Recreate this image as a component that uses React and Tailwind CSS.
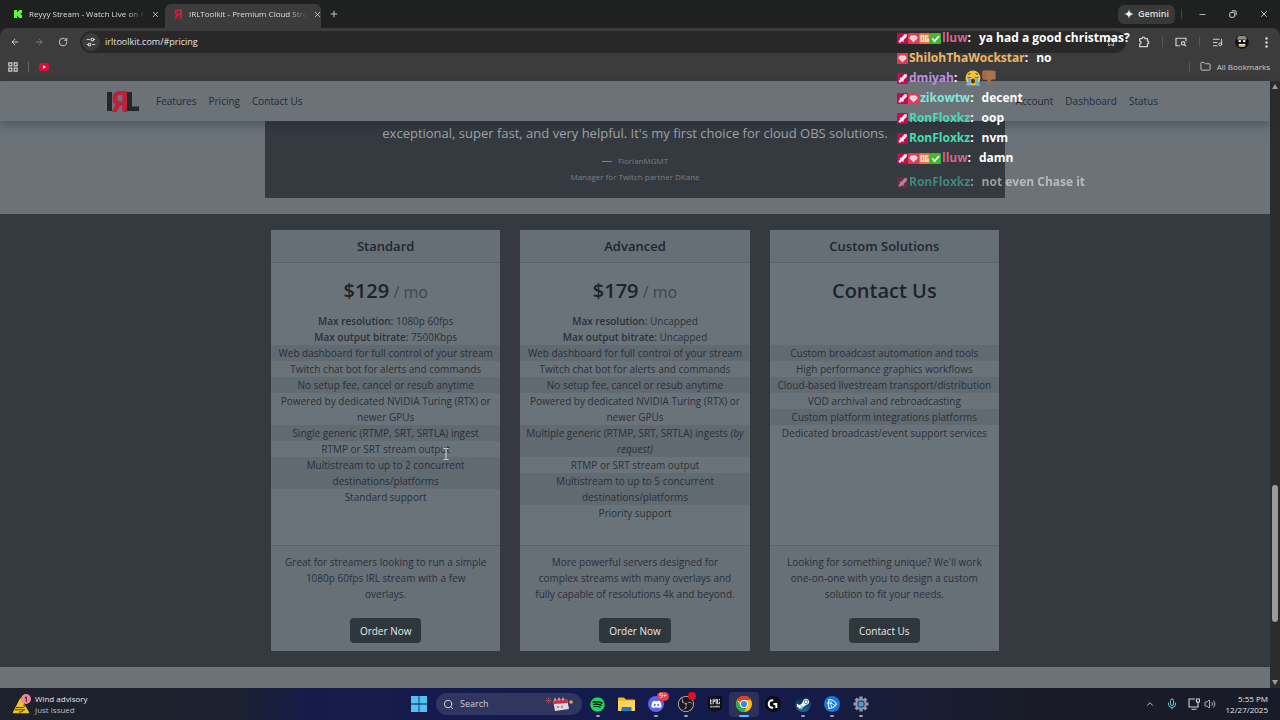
import React from "react";
import { ArrowLeft, ArrowRight, RotateCw, Star, Search, ChevronUp, Mic, X, Plus, Minus, Folder, ListMusic, Volume2 } from "lucide-react";
import { FaSpotify, FaDiscord, FaSteamSymbol } from "react-icons/fa";
import { SiObsstudio, SiEpicgames } from "react-icons/si";

function TunerIcon() {
  return (
    <svg viewBox="0 0 12 12" className="size-2.5" fill="none" stroke="#d5d5d5" strokeWidth="1.3">
      <path d="M1 3h3.5M7.5 9H11" />
      <circle cx="7.6" cy="3" r="1.6" />
      <circle cx="4.2" cy="9" r="1.6" />
      <path d="M9.4 3H11M1 9h1.4" />
    </svg>
  );
}

function AppsIcon() {
  return (
    <svg viewBox="0 0 12 12" className="size-2.5" fill="none" stroke="#d0d0d0" strokeWidth="1.4">
      <path d="M1 1h3.6v3.6H1zM7.4 1H11v3.6H7.4zM1 7.4h3.6V11H1zM7.4 7.4H11V11H7.4z" />
    </svg>
  );
}

function KickIcon() {
  return (
    <svg viewBox="0 0 10 10" className="size-2.5 shrink-0">
      <rect width="10" height="10" rx="1" fill="#102a0c" />
      <path d="M1 1h3v2h1V2h1V1h3v3H8v2h1v3H6V8H5V7H4v2H1z" fill="#5cf83a" />
    </svg>
  );
}

function IrlFavicon() {
  return (
    <svg viewBox="0 0 10 10" className="size-2.5 shrink-0" fill="none" stroke="#c8203c" strokeWidth="2">
      <path d="M8 0v10M8 1.4H4.4a1.8 1.8 0 0 0 0 3.9H8M4.6 5.3 2.3 9.8" />
    </svg>
  );
}

function IrlLogo() {
  return (
    <svg viewBox="0 0 32 21" className="h-[21px] w-8">
      <path d="M0 1h5v19H0z" fill="#23262c" />
      <path d="M20 1h5v14.5h7V20H20z" fill="#23262c" />
      <path d="M20 0v21h-4.6v-6.5h-2.1L9.6 21H4.6l4.3-7.3C6.700 12.700 5.500 10.800 5.500 7.600 5.500 2.600 8.300 0 13 0zM15.400 4h-2c-2.100 0-3.100 1.100-3.100 3.300s1 3.200 3.100 3.200h2z" fill="#c01f38" />
    </svg>
  );
}

function Gemini() {
  return (
    <svg viewBox="0 0 10 10" className="size-2.5" fill="#f2f2f2">
      <path d="M5 0C5.500 3.400 6.600 4.500 10 5 6.600 5.500 5.500 6.600 5 10 4.500 6.600 3.400 5.500 0 5 3.400 4.500 4.500 3.400 5 0z" />
    </svg>
  );
}

function RestoreIcon() {
  return (
    <svg viewBox="0 0 10 10" className="size-2" fill="none" stroke="#dadada" strokeWidth="1.200">
      <rect x="1" y="3" width="6" height="6" rx="1" />
      <path d="M3.500 1h4A1.500 1.500 0 0 1 9 2.500v4" />
    </svg>
  );
}

function ExtensionIcon() {
  return (
    <svg viewBox="0 0 14 14" className="size-3" fill="none" stroke="#cfcfcf" strokeWidth="1.500" strokeLinejoin="round">
      <path d="M2 3h2.800a1.600 1.600 0 0 1 3.200 0h3v3a1.600 1.600 0 0 1 0 3.200V12.500H2V9.300a1.600 1.600 0 0 0 0-3.200z" />
    </svg>
  );
}

function LensIcon() {
  return (
    <svg viewBox="0 0 14 12" className="h-2.5 w-3" fill="none" stroke="#cfcfcf" strokeWidth="1.400">
      <path d="M6 10.500H1v-9h12V5" />
      <circle cx="9.500" cy="7.500" r="2" />
      <path d="m11 9 2.300 2.300" />
    </svg>
  );
}

function Avatar() {
  return (
    <svg viewBox="0 0 14 14" className="size-3.5">
      <circle cx="7" cy="7" r="6.800" fill="#121212" />
      <path d="M2 3.500 4 1h6l2 2.500v1H2z" fill="#8d8d86" />
      <circle cx="4.800" cy="6" r="1.300" fill="#eee" />
      <circle cx="9.200" cy="6" r="1.300" fill="#eee" />
      <path d="M3 9.500h8L9.500 12h-5z" fill="#c4b06a" />
      <path d="M4 9h6v1H4z" fill="#eee" />
    </svg>
  );
}

/* chat badges */
function Sword() {
  return (
    <svg viewBox="0 0 11 11" className="size-[11px] shrink-0">
      <rect width="11" height="11" rx="1" fill="#c30b4b" />
      <path d="M9.800 1.200v2.500L6.300 7.200l.7.800-1 1-1-1-2 2-1.700-1.700 2-2-.8-.8.900-.9.800.5 3.300-3.900z" fill="#ffe9f0" />
    </svg>
  );
}
function Gem() {
  return (
    <svg viewBox="0 0 11 11" className="size-[11px] shrink-0">
      <rect width="11" height="11" rx="1" fill="#df3a58" />
      <path d="M3 2.500h5L9.800 5 5.500 9.300 1.200 5z" fill="#ffe5ea" />
      <path d="M2.500 4.800h6M4.300 4.800 5.500 8l1.200-3.200" stroke="#f09aaa" strokeWidth=".6" fill="none" />
    </svg>
  );
}
function Og() {
  return (
    <svg viewBox="0 0 11 11" className="size-[11px] shrink-0">
      <rect width="11" height="11" rx="1" fill="#e8703a" />
      <path d="M4.600 2.700H2.200v5.600h2.400zM9.400 3H6.700v5.200h2.400V6H8" stroke="#fff1e6" strokeWidth="1.500" fill="none" />
    </svg>
  );
}
function Check() {
  return (
    <svg viewBox="0 0 11 11" className="size-[11px] shrink-0">
      <rect width="11" height="11" rx="1" fill="#41b92c" />
      <path d="m2.300 5.500 2.300 2.600L9 3" stroke="#fff" strokeWidth="1.700" fill="none" />
    </svg>
  );
}
function Sob() {
  return (
    <svg viewBox="0 0 16 16" className="size-4">
      <circle cx="8" cy="8" r="7.500" fill="#f3c33c" />
      <path d="M2.500 7.200c1.200.8 2.500.8 3.700 0M9.800 7.200c1.200.8 2.500.8 3.700 0M3 4.500l2.500-1M13 4.500l-2.500-1" stroke="#5b3d13" strokeWidth="1" fill="none" />
      <path d="M3 8h2.600v7H2.500C1.500 15 1.500 13.500 3 12zM10.400 8H13v4c1.500 1.500 1.500 3 .5 3h-3.100z" fill="#5fb4ec" />
      <ellipse cx="8" cy="11" rx="2" ry="2.600" fill="#5b2b12" />
      <path d="M.5 15.500c1-2 4-2 5 0zM10.500 15.500c1-2 4-2 5 0z" fill="#74c0f0" />
    </svg>
  );
}
function ThumbDown() {
  return (
    <svg viewBox="0 0 16 16" className="size-4">
      <path d="M1.500 2C1.500.8 3 .4 4.500.6h6.300L14.500 1v8.500h-3.800c-1 1-1.500 2-1.300 3.800.1 1.600-2.300 2-2.700.2L6.200 9.800H3C1.500 9.800 1 8.400 1.900 7.700.8 7.300.8 5.800 1.600 5.300.9 4.800.7 3.500 1.500 2z" fill="#a97350" />
      <path d="M2 5.400h3.500M2.200 7.800h3.300M1.900 3h3.500" stroke="#7d4d2c" strokeWidth=".6" />
    </svg>
  );
}

const BADGES = { sword: Sword, gem: Gem, og: Og, check: Check };
const MESSAGES = [
  { badges: ["sword", "gem", "og", "check"], name: "lluw", color: "text-[#d9628e]", text: "ya had a good christmas?" },
  { badges: ["gem"], name: "ShilohThaWockstar", color: "text-[#eeb765]", text: "no" },
  { badges: ["sword"], name: "dmiyah", color: "text-[#bf8fe6]", emoji: true },
  { badges: ["sword", "gem"], name: "zikowtw", color: "text-[#86e6d8]", text: "decent" },
  { badges: ["sword"], name: "RonFloxkz", color: "text-[#45dcb4]", text: "oop" },
  { badges: ["sword"], name: "RonFloxkz", color: "text-[#45dcb4]", text: "nvm" },
  { badges: ["sword", "gem", "og", "check"], name: "lluw", color: "text-[#d9628e]", text: "damn" },
  { badges: ["sword"], name: "RonFloxkz", color: "text-[#45dcb4]", text: "not even Chase it", faded: true },
];

function ChatOverlay() {
  return (
    <ul className="pointer-events-none absolute left-[897px] top-7 z-30 text-[12px] font-bold leading-5 text-white">
      {MESSAGES.map((m, i) => (
        <li key={i} className={m.faded ? "mt-1 flex h-5 items-center opacity-50" : "flex h-5 items-center"}>
          {m.badges.map((b) => {
            const B = BADGES[b];
            return <B key={b} />;
          })}
          <span className={`ml-px ${m.color}`}>{m.name}</span>
          <span className="mr-2">:</span>
          {m.emoji ? (
            <span className="flex">
              <Sob />
              <ThumbDown />
            </span>
          ) : (
            <span className="whitespace-nowrap">{m.text}</span>
          )}
        </li>
      ))}
    </ul>
  );
}

function Browser() {
  return (
    <header className="bg-[#1f2020] text-[#dedede]">
      <div className="flex h-7 items-center text-[8px]">
        <div className="flex w-[165px] items-center gap-1.5 pl-[13px] pr-2">
          <KickIcon />
          <span className="whitespace-nowrap mask-r-from-85%">Reyyy Stream - Watch Live on K</span>
          <button aria-label="Close tab" className="ml-auto"><X size={9} /></button>
        </div>
        <div className="mt-1 flex h-6 w-[156px] items-center gap-1.5 rounded-t-md bg-[#3c3c3c] pb-1 pl-2 pr-1.5">
          <IrlFavicon />
          <span className="whitespace-nowrap mask-r-from-85%">IRLToolkit - Premium Cloud Stre</span>
          <button aria-label="Close tab" className="ml-auto"><X size={9} /></button>
        </div>
        <button aria-label="New tab" className="ml-2"><Plus size={10} /></button>
        <div className="ml-auto flex items-center">
          <button className="flex h-[19px] items-center gap-1 rounded-md bg-[#383939] px-1.5 text-[9px] font-semibold"><Gemini />Gemini</button>
          <span className="ml-1.5 h-2.5 w-px bg-[#444]" />
          <button aria-label="Minimize" className="ml-4"><Minus size={9} /></button>
          <button aria-label="Restore" className="ml-[22px]"><RestoreIcon /></button>
          <button aria-label="Close" className="ml-[22px] mr-[11px]"><X size={10} /></button>
        </div>
      </div>
      <div className="rounded-t-lg bg-[#3c3c3c]">
        <div className="flex h-7 items-center pl-2.5 pr-2.5 text-[9px]">
          <button aria-label="Back"><ArrowLeft size={10} /></button>
          <button aria-label="Forward" className="ml-3.5 text-[#808080]"><ArrowRight size={10} /></button>
          <button aria-label="Reload" className="ml-3.5"><RotateCw size={10} /></button>
          <form className="ml-3 flex h-[22px] flex-1 items-center gap-[5px] rounded-full bg-[#282828] pl-0.5 pr-2.5">
            <button type="button" aria-label="Site information" className="flex size-[18px] items-center justify-center rounded-full bg-[#3c3c3c]"><TunerIcon /></button>
            <input aria-label="Address" defaultValue="irltoolkit.com/#pricing" className="min-w-0 flex-1 bg-transparent text-[#e3e3e3] outline-none" />
            <button type="button" aria-label="Bookmark"><Star size={10} /></button>
          </form>
          <button aria-label="Extensions" className="ml-3"><ExtensionIcon /></button>
          <span className="ml-3 h-2.5 w-px bg-[#565656]" />
          <button aria-label="Lens" className="ml-3"><LensIcon /></button>
          <span className="ml-3 h-2.5 w-px bg-[#565656]" />
          <button aria-label="Media" className="ml-3"><ListMusic size={11} /></button>
          <button aria-label="Profile" className="ml-3"><Avatar /></button>
          <button aria-label="Menu" className="ml-4 mr-0.5">
            <svg viewBox="0 0 3 11" className="h-[11px] w-[3px]" fill="#dcdcdc">
              <circle cx="1.500" cy="1.500" r="1.200" /><circle cx="1.500" cy="5.500" r="1.200" /><circle cx="1.500" cy="9.500" r="1.200" />
            </svg>
          </button>
        </div>
        <div className="flex h-[25px] items-center pb-1 pl-2 pr-2.5 text-[8px]">
          <button aria-label="Apps"><AppsIcon /></button>
          <span className="ml-2.5 h-2.5 w-px bg-[#666]" />
          <a href="#youtube" aria-label="YouTube" className="ml-2.5">
            <svg viewBox="0 0 10 8" className="h-2 w-2.5"><rect width="10" height="8" rx="2" fill="#d90f38" /><path d="M4 2.300 7 4 4 5.700z" fill="#fff" /></svg>
          </a>
          <span className="ml-auto h-2.5 w-px bg-[#565656]" />
          <button className="ml-2.5 flex items-center gap-1.5 text-[#cccccc]"><Folder size={11} />All Bookmarks</button>
        </div>
      </div>
    </header>
  );
}

function Nav() {
  return (
    <nav className="relative z-10 flex h-10 items-center justify-between bg-[#6b7379] pl-[107px] pr-28 text-[10px] font-medium text-[#242b35] shadow-[0_4px_10px_rgba(30,35,42,0.35)]">
      <div className="flex items-center gap-3">
        <a href="#home" aria-label="IRLToolkit" className="mr-[5px]"><IrlLogo /></a>
        <a href="#features">Features</a>
        <a href="#pricing">Pricing</a>
        <a href="#contact">Contact Us</a>
      </div>
      <div className="flex gap-3">
        <a href="#account">Account</a>
        <a href="#dashboard">Dashboard</a>
        <a href="#status">Status</a>
      </div>
    </nav>
  );
}

const COMMON = [
  "Web dashboard for full control of your stream",
  "Twitch chat bot for alerts and commands",
  "No setup fee, cancel or resub anytime",
  "Powered by dedicated NVIDIA Turing (RTX) or newer GPUs",
];
const PLANS = [
  {
    title: "Standard", price: "$129", per: "/ mo", res: "1080p 60fps", rate: "7500Kbps",
    rows: [...COMMON, "Single generic (RTMP, SRT, SRTLA) ingest", "RTMP or SRT stream output", "Multistream to up to 2 concurrent destinations/platforms", "Standard support"],
    blurb: <>Great for streamers looking to run a simple 1080p 60fps IRL stream with a few<br />overlays.</>, cta: "Order Now",
  },
  {
    title: "Advanced", price: "$179", per: "/ mo", res: "Uncapped", rate: "Uncapped",
    rows: [...COMMON, <>Multiple generic (RTMP, SRT, SRTLA) ingests <em>(by</em> <em>request)</em></>, "RTMP or SRT stream output", "Multistream to up to 5 concurrent destinations/platforms", "Priority support"],
    blurb: "More powerful servers designed for complex streams with many overlays and fully capable of resolutions 4k and beyond.", cta: "Order Now",
  },
  {
    title: "Custom Solutions", price: "Contact Us",
    rows: ["Custom broadcast automation and tools", "High performance graphics workflows", "Cloud-based livestream transport/distribution", "VOD archival and rebroadcasting", "Custom platform integrations platforms", "Dedicated broadcast/event support services"],
    blurb: "Looking for something unique? We'll work one-on-one with you to design a custom solution to fit your needs.", cta: "Contact Us",
  },
];

function Plan({ plan }) {
  return (
    <article className="flex flex-col bg-[#6a7379] text-center text-[10px] leading-4 text-[#2a3039]">
      <h2 className="border-b border-[#58616a] bg-[#666e76] py-2 text-[13px] font-semibold leading-4 text-[#20262f]">{plan.title}</h2>
      <div className="flex-1 pb-6 pt-3">
        <p className="text-[20px] font-semibold leading-8 text-[#1d232c]">
          {plan.price}
          {plan.per && <span className="text-[16px] font-normal leading-none text-[#3f464f]"> {plan.per}</span>}
        </p>
        <div className="mt-1.5 h-8">
          {plan.res && (
            <>
              <p><b className="font-semibold">Max resolution:</b> {plan.res}</p>
              <p><b className="font-semibold">Max output bitrate:</b> {plan.rate}</p>
            </>
          )}
        </div>
        <ul>
          {plan.rows.map((r, i) => (
            <li key={i} className="px-0.5 odd:bg-[#616971]">{r}</li>
          ))}
        </ul>
      </div>
      <footer className="border-t border-[#5a636b] bg-[#676f77] px-3 pb-2 pt-2">
        <p>{plan.blurb}</p>
        <button className="mt-4 h-[25px] rounded-sm bg-[#30373c] px-2.5 font-medium text-[#e6e8ea]">{plan.cta}</button>
      </footer>
    </article>
  );
}

function Page() {
  return (
    <main className="min-w-0 flex-1 bg-[#6b7379]">
      <Nav />
      <section className="px-4 pb-4">
        <figure className="mx-auto max-w-[740px] bg-[#343a40] pb-[13px] text-center">
          <blockquote className="text-[13px] leading-6 text-[#a0a4a8]">exceptional, super fast, and very helpful. It's my first choice for cloud OBS solutions.</blockquote>
          <figcaption className="pt-2 text-[8px] leading-4 text-[#787e84]">
            <p className="flex items-center justify-center gap-1.5"><span className="h-px w-2.5 bg-[#787e84]" />FlorianMGMT</p>
            <p>Manager for Twitch partner DKane</p>
          </figcaption>
        </figure>
      </section>
      <section className="bg-[#343a40] px-4 py-4">
        <div className="mx-auto grid max-w-[728px] grid-cols-3 gap-5">
          {PLANS.map((p) => <Plan key={p.title} plan={p} />)}
        </div>
      </section>
    </main>
  );
}

function Scrollbar() {
  return (
    <div aria-hidden="true" className="flex w-2.5 flex-col items-center bg-[#2c2c2c] py-[3px]">
      <svg viewBox="0 0 6 5" className="h-[5px] w-1.5" fill="#a0a0a0"><path d="M3 0 6 5H0z" /></svg>
      <div className="flex w-full flex-1 flex-col items-center">
        <div className="grow-[396]" />
        <div className="w-1.5 grow-[137] rounded-full bg-[#9b9b9b]" />
        <div className="grow-[58]" />
      </div>
      <svg viewBox="0 0 6 5" className="h-[5px] w-1.5" fill="#a0a0a0"><path d="M0 0h6L3 5z" /></svg>
    </div>
  );
}

function TaskButton({ label, children, state }) {
  return (
    <button aria-label={label} className={state === "active" ? "relative flex items-center justify-center rounded-sm bg-[#2b3158]" : "relative flex items-center justify-center"}>
      {children}
      {state === "open" && <span className="absolute bottom-0 h-0.5 w-1 rounded-full bg-[#9b9db5]" />}
      {state === "active" && <span className="absolute bottom-0 h-0.5 w-2.5 rounded-full bg-[#4cc2ff]" />}
    </button>
  );
}

function Taskbar() {
  return (
    <footer className="grid h-8 grid-cols-[1fr_auto_1fr] items-center bg-[linear-gradient(90deg,#1d212b_0%,#1c2130_18%,#161c4a_24%,#141a4c_40%,#141a4a_62%,#191d38_70%,#191c28_80%)] text-[8px] text-[#e4e4e8]">
      <div className="flex items-center gap-[3px] pl-3">
        <svg viewBox="0 0 20 20" className="size-5">
          <path d="M9 4.500 17 18c.4.700 0 1.200-.7 1.200H1.700c-.7 0-1-.5-.7-1.200L8 4.500c.2-.4.800-.4 1 0z" fill="#ecc523" />
          <path d="M4 13.500h7c2 0 2-2.500.3-2.500M3 15.700h10M7 18c2.500 0 4.500-.3 4-2" stroke="#4a3d10" strokeWidth="1" fill="none" />
          <circle cx="14" cy="5" r="5" fill="#f0869b" />
          <path d="M12.800 4 14.300 2.800v5" stroke="#3a1220" strokeWidth="1" fill="none" />
        </svg>
        <div className="leading-[11px]">
          <p>Wind advisory</p>
          <p className="text-[#b9bac0]">Just issued</p>
        </div>
      </div>
      <div className="flex h-[25px] items-center">
        <button aria-label="Start" className="flex w-[29px] justify-center">
          <svg viewBox="0 0 16 16" className="size-4" fill="#50c3f4"><path d="M0 0h7.600v7.600H0zM8.400 0H16v7.600H8.400zM0 8.400h7.600V16H0zM8.400 8.400H16V16H8.400z" /></svg>
        </button>
        <label className="ml-[3px] mr-px flex h-[22px] w-[146px] items-center gap-1.5 rounded-full bg-[#2f3660] pl-[7px] pr-2">
          <Search size={11} className="shrink-0" />
          <input aria-label="Search" placeholder="Search" className="w-0 min-w-0 flex-1 bg-transparent text-[9px] outline-none placeholder:text-[#c9cbdc]" />
          <svg viewBox="0 0 30 16" className="h-4 w-[30px]">
            <path d="M4.500 1v7M1 4.500h7M2 2l5 5M7 2 2 7" stroke="#a4525c" strokeWidth=".7" />
            <path d="M9 4 23 3l2 10-14 2z" fill="#ddd7df" />
            <path d="M9 4 23 3l.8 4L9.800 8z" fill="#c92d43" />
            <path d="M11 2v3M15 1.700v3M19 1.500v3" stroke="#eedde0" strokeWidth="1" />
            <path d="M13 10h2v2h-2zM17 9.700h2v2h-2z" fill="#9a8fa4" />
            <circle cx="27" cy="6" r="1.800" fill="#f0a04c" />
          </svg>
        </label>
        <div className="grid h-[25px] w-[293px] grid-cols-10">
          <TaskButton label="Spotify" state="open"><span className="rounded-full bg-black"><FaSpotify size={15} color="#1ed760" /></span></TaskButton>
          <TaskButton label="File Explorer">
            <svg viewBox="0 0 17 15" className="h-[15px] w-[17px]">
              <path d="M0 1.500C0 .7.500.5 1 .5h5l2 2h8c.6 0 1 .3 1 1V13c0 .7-.4 1-1 1H1c-.6 0-1-.3-1-1z" fill="#f2b632" />
              <path d="M0 4h17v9c0 .7-.4 1-1 1H1c-.6 0-1-.3-1-1z" fill="#fbd45c" />
              <path d="M3.500 14v-3c0-.6.400-1 1-1h8c.6 0 1 .4 1 1v3z" fill="#2275c4" />
            </svg>
          </TaskButton>
          <TaskButton label="Discord" state="open">
            <span className="flex size-4 items-center justify-center rounded-full bg-[#5865f2]"><FaDiscord size={11} color="#fff" /></span>
            <span className="absolute right-0.5 top-0 flex h-[9px] items-center rounded-full bg-[#d8414f] px-0.5 text-[7px] text-white">9+</span>
          </TaskButton>
          <TaskButton label="OBS Studio" state="open">
            <span className="rounded-full bg-[#1b1b1f]"><SiObsstudio size={16} color="#c6c6ca" /></span>
            <span className="absolute right-1 top-0 size-2 rounded-full bg-[#e3101c]" />
          </TaskButton>
          <TaskButton label="Epic Games">
            <SiEpicgames size={16} color="#0d0e12" className="bg-[linear-gradient(#e8e8e8,#e8e8e8)] bg-[length:10px_10px] bg-center bg-no-repeat" />
          </TaskButton>
          <TaskButton label="Chrome" state="active">
            <svg viewBox="0 0 16 16" className="size-4">
              <circle cx="8" cy="8" r="8" fill="#fbc116" />
              <path d="M8 8 1.070 4A8 8 0 0 1 14.930 4H8z" fill="#e33b2e" />
              <path d="M1.070 4A8 8 0 0 0 8 16l3.460-6L8 8 4.540 10z" fill="#2da94f" />
              <circle cx="8" cy="8" r="4" fill="#fff" />
              <circle cx="8" cy="8" r="3.100" fill="#3f83f2" />
            </svg>
          </TaskButton>
          <TaskButton label="Logitech G HUB">
            <svg viewBox="0 0 16 16" className="size-4">
              <circle cx="8" cy="8" r="8" fill="#0c0d12" />
              <path d="M8.200 4.200H7.500a3.800 3.800 0 0 0 0 7.600h.7M8.500 8h2.800v4" stroke="#fff" strokeWidth="2" fill="none" />
            </svg>
          </TaskButton>
          <TaskButton label="Steam" state="open">
            <span className="flex size-4 items-center justify-center rounded-full bg-linear-to-b from-[#101c3c] to-[#14699c]"><FaSteamSymbol size={14} color="#eef3f8" /></span>
          </TaskButton>
          <TaskButton label="Battle.net" state="open">
            <svg viewBox="0 0 16 16" className="size-4" fill="none">
              <circle cx="8" cy="8" r="8" fill="#1778e0" />
              <path d="M5 12.500C4.200 9 4.200 6 5 3.500c3 0 6 2 7.500 4.500-1.500 2.500-4.500 4.300-7.500 4.500z" stroke="#e4f2ff" strokeWidth="1.200" />
              <path d="M2.800 7c2.500-.5 5.500 0 8 2.500M7 5.200c-.3 2.500-.2 4 .8 6" stroke="#e4f2ff" strokeWidth="1" />
            </svg>
          </TaskButton>
          <TaskButton label="Settings" state="open">
            <svg viewBox="0 0 16 16" className="size-4">
              <g stroke="#929baa" strokeWidth="3.200"><path d="M8 .5v15M.5 8h15M2.700 2.700l10.600 10.600M13.300 2.700 2.700 13.300" /></g>
              <circle cx="8" cy="8" r="5.800" fill="#929baa" />
              <circle cx="8" cy="8" r="3.800" fill="#38414f" />
              <circle cx="8" cy="8" r="2.600" fill="#4a9be6" />
            </svg>
          </TaskButton>
        </div>
      </div>
      <div className="flex items-center justify-end pr-3">
        <button aria-label="Show hidden icons"><ChevronUp size={10} /></button>
        <button aria-label="Microphone" className="ml-[11px]"><Mic size={12} color="#6cc0cf" /></button>
        <button aria-label="Network" className="ml-2.5">
          <svg viewBox="0 0 12 12" className="size-3" fill="none" stroke="#d0d1d8" strokeWidth="1.100">
            <path d="M7 1H1v8h9V6.500M3.500 11.200h5M8.500 1h3v3h-3zM10 4v2.500" />
          </svg>
        </button>
        <button aria-label="Volume" className="ml-1"><Volume2 size={12} strokeWidth={1.5} /></button>
        <div className="ml-2.5 text-right leading-[11px]">
          <p>5:55 PM</p>
          <p>12/27/2025</p>
        </div>
      </div>
    </footer>
  );
}

export default function App() {
  return (
    <div className="relative flex min-h-screen flex-col overflow-x-hidden bg-[#1f2020] font-['Open_Sans','Noto_Sans',sans-serif]">
      <Browser />
      <div className="flex flex-1">
        <Page />
        <Scrollbar />
      </div>
      <Taskbar />
      <ChatOverlay />
      <svg viewBox="0 0 6 12" className="pointer-events-none absolute left-[443px] top-[448px] z-20 h-3 w-1.5" fill="none" stroke="#d4d8dc" strokeWidth="1">
        <path d="M.5.500h2l.5.500.500-.5h2M3 1v10M.5 11.500h2L3 11l.5.500h2" />
      </svg>
    </div>
  );
}
